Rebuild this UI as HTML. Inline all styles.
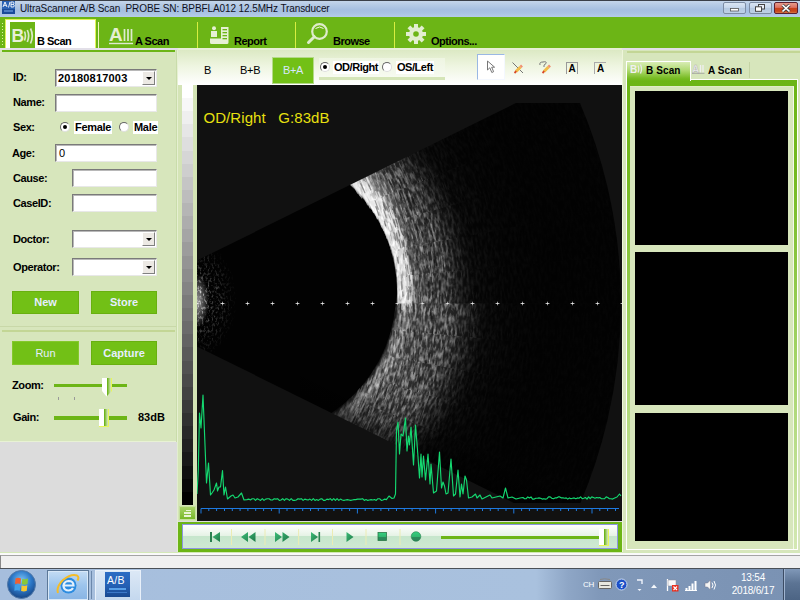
<!DOCTYPE html>
<html>
<head>
<meta charset="utf-8">
<title>UltraScanner A/B Scan</title>
<style>
*{box-sizing:border-box;margin:0;padding:0}
html,body{width:800px;height:600px;overflow:hidden;background:#dcdcdc;font-family:"Liberation Sans",sans-serif;font-size:11px;color:#000}
.a{position:absolute}
.b{font-weight:bold}
#title{left:0;top:0;width:800px;height:17px;background:linear-gradient(#c4d5ea 0,#b2c8e4 30%,#a6bfe0 55%,#a9c3e2 75%,#b6cce7 100%);border-top:1px solid #3a3f48}
#title .t{left:20px;top:1px;font-size:10px;line-height:13px;color:#101020;white-space:pre;letter-spacing:-0.1px}
#tool{left:0;top:17px;width:800px;height:31px;background:#6cb516;overflow:hidden}
.tl{position:absolute;top:18px;font-weight:bold;font-size:11px;line-height:13px;white-space:nowrap;letter-spacing:-0.5px}
.sep{position:absolute;top:5px;width:1px;height:26px;background:#d8ee40}
.lbl{position:absolute;left:13px;font-weight:bold;font-size:11px;line-height:13px;white-space:nowrap;letter-spacing:-0.4px}
.fld{position:absolute;height:18px;background:#fff;border:1px solid;border-color:#7a7a7a #e8e8e8 #e8e8e8 #7a7a7a;box-shadow:inset 1px 1px 0 #b8b8b8}
.dd{position:absolute;right:1px;top:1px;width:13px;height:14px;background:#ece9e4;border:1px solid;border-color:#fff #808080 #808080 #fff}
.dd:after{content:"";position:absolute;left:3px;top:5px;border:3px solid transparent;border-top:3px solid #000;border-bottom:0}
.btn{position:absolute;height:23px;background:#72c016;border:1px solid #68b010;color:#e6eeff;font-weight:bold;font-size:11px;line-height:21px;text-align:center}
.radio{position:absolute;width:10px;height:10px;border-radius:50%;background:#fff;border:1px solid;border-color:#666 #ddd #ddd #666}
.radio.on:after{content:"";position:absolute;left:2px;top:2px;width:4px;height:4px;border-radius:50%;background:#000}
.rl{position:absolute;background:#fff;font-weight:bold;font-size:11px;line-height:13px;height:13px;padding:0 1px;white-space:nowrap}
</style>
</head>
<body>
<!-- title bar -->
<div class="a" id="title">
  <svg class="a" style="left:2px;top:0px" width="13" height="13" viewBox="0 0 13 13"><rect width="13" height="13" fill="#2a62b4"/><rect y="8" width="13" height="5" fill="#1a4a98"/><path d="M1 6 L3 1 L5 6 M1.8 4.3H4.2 M6.5 6.5 L8 .8 M9 1V6 M9 1H11Q12 1 12 2.2Q12 3.4 11 3.4H9 M11 3.4Q12.3 3.6 12.3 4.8Q12.3 6 11 6H9" stroke="#fff" stroke-width=".9" fill="none"/><path d="M2 10H11" stroke="#6fa0e0" stroke-width="1.2"/></svg>
  <div class="a t">UltraScanner A/B Scan  PROBE SN: BPBFLA012 12.5MHz Transducer</div>
</div>
<!-- window controls -->
<svg class="a" style="left:720px;top:1px" width="80" height="15" viewBox="720 1 80 15">
<defs><linearGradient id="wb" x1="0" x2="0" y1="0" y2="1"><stop offset="0" stop-color="#dbe6f3"/><stop offset=".45" stop-color="#c8d8ec"/><stop offset=".5" stop-color="#b4c8e0"/><stop offset="1" stop-color="#bfd2e8"/></linearGradient>
<linearGradient id="wr" x1="0" x2="0" y1="0" y2="1"><stop offset="0" stop-color="#e8a090"/><stop offset=".45" stop-color="#dc7060"/><stop offset=".5" stop-color="#c8401c"/><stop offset=".8" stop-color="#c8481c"/><stop offset="1" stop-color="#d88858"/></linearGradient></defs>
<rect x="723.5" y="2.5" width="22" height="11" rx="1.5" fill="url(#wb)" stroke="#7c8ca4"/>
<rect x="749.5" y="2.5" width="22" height="11" rx="1.5" fill="url(#wb)" stroke="#7c8ca4"/>
<rect x="774.5" y="2.5" width="23" height="11" rx="1.5" fill="url(#wr)" stroke="#5c2030"/>
<rect x="730.5" y="8.5" width="8" height="2.5" fill="#fff" stroke="#555" stroke-width=".8"/>
<rect x="758.5" y="4.500" width="6" height="4.500" fill="#e8eef8" stroke="#444" stroke-width="1"/><rect x="755.5" y="6.800" width="6" height="4.500" fill="#fff" stroke="#444" stroke-width="1"/>
<path d="M782.5 5L789.5 11.500M789.500 5L782.500 11.500" stroke="#444" stroke-width="3.200"/><path d="M782.500 5L789.500 11.500M789.500 5L782.500 11.500" stroke="#fff" stroke-width="1.700"/>
</svg>
<!-- toolbar -->
<div class="a" id="tool">
  <!-- grip dots -->
  <svg class="a" style="left:1px;top:5px" width="3" height="24"><g fill="#dff0a0"><rect x="1" y="1" width="1" height="1"/><rect x="1" y="4" width="1" height="1"/><rect x="1" y="7" width="1" height="1"/><rect x="1" y="10" width="1" height="1"/><rect x="1" y="13" width="1" height="1"/><rect x="1" y="16" width="1" height="1"/><rect x="1" y="19" width="1" height="1"/><rect x="1" y="22" width="1" height="1"/></g></svg>
  <!-- selected B Scan tab -->
  <div class="a" style="left:5px;top:2px;width:91px;height:30px;background:#fff;border:1px solid #e2f25a;border-bottom:0"></div>
  <div class="a" style="left:10px;top:5px;width:25px;height:26px;background:#6cb516"></div>
  <svg class="a" style="left:10px;top:5px" width="25" height="26" viewBox="0 0 25 26"><text x="1.500" y="20" font-family="Liberation Sans" font-weight="bold" font-size="17.500" fill="#e8f0d8">B</text><path d="M14.500 9.500Q16.300 13.500 14.500 18.500 M17.300 8Q20 13.500 17.300 20 M20.500 6.500Q24 13.500 20.500 21.500" stroke="#dbe8c8" stroke-width="1.700" fill="none"/></svg>
  <div class="tl" style="left:37px">B Scan</div>
  <div class="sep" style="left:98px;background:#eef5c0"></div>
  <!-- A scan -->
  <svg class="a" style="left:108px;top:8px" width="27" height="20" viewBox="0 0 27 20"><text x="1" y="16" font-family="Liberation Sans" font-weight="bold" font-size="19" fill="#e4efd2">A</text><path d="M16.5 4V16 M20 4V16 M23.5 4V16" stroke="#dfead0" stroke-width="1.7"/><path d="M1 18.5H25" stroke="#dfead0" stroke-width="1.4"/></svg>
  <div class="tl" style="left:135px">A Scan</div>
  <div class="sep" style="left:197px"></div>
  <!-- report -->
  <svg class="a" style="left:209px;top:8px" width="22" height="20" viewBox="0 0 22 20"><g fill="#e6f0d4"><circle cx="5" cy="3.2" r="2"/><path d="M2 6H8V12H2z"/><path d="M1 13.5H12V2H19.5V17.5Q19.5 19 18 19H2.5Q1 19 1 17.5z"/></g><g fill="#6cb516"><rect x="13.5" y="4" width="4.5" height="1.3"/><rect x="13.5" y="7" width="4.5" height="1.3"/><rect x="13.5" y="10" width="4.5" height="1.3"/><rect x="13.5" y="13" width="4.5" height="1.3"/></g></svg>
  <div class="tl" style="left:234px">Report</div>
  <div class="sep" style="left:295px"></div>
  <!-- browse -->
  <svg class="a" style="left:306px;top:5px" width="24" height="24" viewBox="0 0 24 24"><circle cx="13.5" cy="9.5" r="7.3" fill="none" stroke="#dfeccb" stroke-width="2.2"/><path d="M8.3 14.7L2.5 20.5" stroke="#dfeccb" stroke-width="3" stroke-linecap="round"/><path d="M9.5 6.5Q13.5 3.5 17.5 6.5" stroke="#f4f9ea" stroke-width="1" fill="none"/></svg>
  <div class="tl" style="left:333px">Browse</div>
  <div class="sep" style="left:394px"></div>
  <!-- options -->
  <svg class="a" style="left:405px;top:6px" width="22" height="22" viewBox="-11 -11 22 22"><g fill="#e2eed0"><circle r="7"/><g id="tth"><rect x="-2" y="-10" width="4" height="20"/></g><use href="#tth" transform="rotate(45)"/><use href="#tth" transform="rotate(90)"/><use href="#tth" transform="rotate(135)"/></g><circle r="2.8" fill="#6cb516"/></svg>
  <div class="tl" style="left:431px">Options...</div>
</div>

<!-- strips under toolbar -->
<div class="a" style="left:0;top:48px;width:800px;height:2px;background:#e2dfe8"></div><div class="a" style="left:178px;top:48px;width:444px;height:2px;background:#e6efd4"></div>
<!-- left panel -->
<div class="a" id="left" style="left:0;top:50px;width:178px;height:392px;background:#d7e6bc;border-right:1px solid #e6f0d2;border-bottom:1px solid #e8f2d4">
  <div class="a" style="left:2px;top:0;width:173px;height:2px;background:#6cb516"></div>
  <div class="a" style="left:176px;top:0;width:1px;height:392px;background:#c9dcaa"></div>
</div>
<div class="a" style="left:0;top:0;width:0;height:0" id="form">
  <div class="lbl" style="top:71px">ID:</div>
  <div class="fld" style="left:55px;top:69px;width:102px"><span class="a b" style="left:2px;top:2px;font-size:11px;line-height:12px;letter-spacing:0.2px">20180817003</span><div class="dd"></div></div>
  <div class="lbl" style="top:96px">Name:</div>
  <div class="fld" style="left:55px;top:94px;width:102px"></div>
  <div class="lbl" style="top:121px">Sex:</div>
  <div class="radio on" style="left:60px;top:122px"></div>
  <div class="rl" style="left:74px;top:121px;letter-spacing:-0.3px">Female</div>
  <div class="radio" style="left:119px;top:122px"></div>
  <div class="rl" style="left:133px;top:121px;letter-spacing:-0.3px">Male</div>
  <div class="lbl" style="top:147px;left:12px">Age:</div>
  <div class="fld" style="left:55px;top:144px;width:102px"><span class="a" style="left:3px;top:2px;font-size:11px;line-height:12px">0</span></div>
  <div class="lbl" style="top:172px">Cause:</div>
  <div class="fld" style="left:72px;top:169px;width:85px"></div>
  <div class="lbl" style="top:197px">CaseID:</div>
  <div class="fld" style="left:72px;top:194px;width:85px"></div>
  <div class="lbl" style="top:233px">Doctor:</div>
  <div class="fld" style="left:72px;top:230px;width:85px"><div class="dd"></div></div>
  <div class="lbl" style="top:261px">Operator:</div>
  <div class="fld" style="left:72px;top:258px;width:85px"><div class="dd"></div></div>
  <div class="btn" style="left:12px;top:291px;width:67px">New</div>
  <div class="btn" style="left:91px;top:291px;width:66px">Store</div>
  <div class="a" style="left:0;top:326px;width:176px;height:1px;background:#c8d8a8"></div>
  <div class="a" style="left:2px;top:330px;width:173px;height:2px;background:#c3d695"></div>
  <div class="btn" style="left:12px;top:341px;width:67px;height:24px;line-height:22px;font-weight:normal;border-color:#84c82c">Run</div>
  <div class="btn" style="left:91px;top:341px;width:66px;height:24px;line-height:22px">Capture</div>
  <!-- zoom slider -->
  <div class="lbl" style="top:379px;left:12px">Zoom:</div>
  <div class="a" style="left:54px;top:384px;width:73px;height:3px;background:#6cb516"></div>
  <svg class="a" style="left:102px;top:378px" width="10" height="19" viewBox="0 0 10 19"><defs><linearGradient id="tg" x1="0" x2="1"><stop offset="0" stop-color="#fff"/><stop offset=".5" stop-color="#fff"/><stop offset=".52" stop-color="#64b010"/><stop offset=".88" stop-color="#d4e6b8"/><stop offset=".9" stop-color="#e8f65a"/><stop offset="1" stop-color="#e8f65a"/></linearGradient></defs><path d="M0 0H10V13L4.5 18.5L0 13z" fill="url(#tg)"/></svg>
  <div class="a" style="left:58px;top:397px;width:1px;height:3px;background:#999"></div>
  <div class="a" style="left:74px;top:397px;width:1px;height:3px;background:#999"></div>
  <!-- gain slider -->
  <div class="lbl" style="top:411px">Gain:</div>
  <div class="a" style="left:54px;top:416px;width:73px;height:4px;background:#6cb516"></div>
  <svg class="a" style="left:99px;top:409px" width="10" height="18" viewBox="0 0 10 18"><rect width="10" height="18" fill="url(#tg)"/><rect y="17" width="10" height="1" fill="#e8f65a"/></svg>
  <div class="lbl" style="top:411px;left:138px;letter-spacing:0">83dB</div>
</div>

<!-- center top strip -->
<div class="a" id="ctop" style="left:178px;top:50px;width:444px;height:35px;background:linear-gradient(#dce9c4,#eef5e0 45%,#ffffff)"></div>
<div class="a" style="left:204px;top:64px;font-size:11px;line-height:13px">B</div>
<div class="a" style="left:240px;top:64px;font-size:11px;line-height:13px;letter-spacing:-0.3px">B+B</div>
<div class="a" style="left:272px;top:57px;width:42px;height:27px;background:#72c016;border:1px solid #b4da88;color:#d8e8ff;font-size:11px;line-height:25px;text-align:center;letter-spacing:-0.3px">B+A</div>
<div class="a" style="left:319px;top:58px;width:126px;height:22px;background:linear-gradient(#eef5e2,#f8fbf2)"></div>
<div class="a" style="left:319px;top:77px;width:126px;height:3px;background:#d5e5b8"></div>
<div class="radio on" style="left:320px;top:62px"></div>
<div class="rl" style="left:333px;top:61px;letter-spacing:-0.45px">OD/Right</div>
<div class="radio" style="left:382px;top:62px"></div>
<div class="rl" style="left:396px;top:61px;letter-spacing:-0.45px">OS/Left</div>
<!-- tool icons -->
<div class="a" style="left:477px;top:54px;width:28px;height:26px;background:#fff;border:1px solid;border-color:#9ab8e4 #f4f8ff #f4f8ff #9ab8e4"></div>
<svg class="a" style="left:486px;top:60px" width="11" height="14" viewBox="0 0 11 14"><path d="M1.5 1V10L3.8 7.8L5.8 12.5L7.6 11.7L5.7 7.2H8.6z" fill="#fff" stroke="#777" stroke-width="1"/></svg>
<svg class="a" style="left:511px;top:61px" width="15" height="13" viewBox="0 0 15 13"><path d="M1.500 1.500L12 12" stroke="#666" stroke-width=".9"/><path d="M5 10.500L9.500 6" stroke="#f2bc48" stroke-width="3"/><path d="M3.500 12L5.300 10.200" stroke="#d84828" stroke-width="1.800"/><path d="M9.500 6L11 4.500" stroke="#f09070" stroke-width="2.600"/></svg>
<svg class="a" style="left:538px;top:60px" width="16" height="14" viewBox="0 0 16 14"><path d="M2 5Q1 2 5 2Q9 1 8 3.5Q5 5 6 7" stroke="#777" stroke-width="1" fill="none"/><path d="M6 11.500L10.500 7" stroke="#f2bc48" stroke-width="3"/><path d="M4.500 13L6.300 11.200" stroke="#d84828" stroke-width="1.800"/><path d="M10.500 7L12 5.500" stroke="#f09070" stroke-width="2.600"/></svg>
<div class="a b" style="left:566px;top:62px;width:12px;height:12px;border:1px solid #999;border-bottom:0;font-size:10px;line-height:12px;text-align:center">A</div>
<div class="a b" style="left:594px;top:62px;width:12px;height:12px;border-top:1px solid #aaa;border-left:1px solid #aaa;font-size:10px;line-height:12px;text-align:center">A</div>
<!-- grayscale strip column -->
<div class="a" style="left:178px;top:85px;width:19px;height:436px;background:#d4e4b6"></div>
<div class="a" id="gbar" style="left:182px;top:85px;width:11px;height:420px;background:linear-gradient(#ffffff 0.000%,#ffffff 3.125%,#f7f7f7 3.125%,#f7f7f7 6.250%,#efefef 6.250%,#efefef 9.375%,#e6e6e6 9.375%,#e6e6e6 12.500%,#dedede 12.500%,#dedede 15.625%,#d6d6d6 15.625%,#d6d6d6 18.750%,#cecece 18.750%,#cecece 21.875%,#c5c5c5 21.875%,#c5c5c5 25.000%,#bdbdbd 25.000%,#bdbdbd 28.125%,#b5b5b5 28.125%,#b5b5b5 31.250%,#adadad 31.250%,#adadad 34.375%,#a5a5a5 34.375%,#a5a5a5 37.500%,#9c9c9c 37.500%,#9c9c9c 40.625%,#949494 40.625%,#949494 43.750%,#8c8c8c 43.750%,#8c8c8c 46.875%,#848484 46.875%,#848484 50.000%,#7b7b7b 50.000%,#7b7b7b 53.125%,#737373 53.125%,#737373 56.250%,#6b6b6b 56.250%,#6b6b6b 59.375%,#636363 59.375%,#636363 62.500%,#5a5a5a 62.500%,#5a5a5a 65.625%,#525252 65.625%,#525252 68.750%,#4a4a4a 68.750%,#4a4a4a 71.875%,#424242 71.875%,#424242 75.000%,#3a3a3a 75.000%,#3a3a3a 78.125%,#313131 78.125%,#313131 81.250%,#292929 81.250%,#292929 84.375%,#212121 84.375%,#212121 87.500%,#191919 87.500%,#191919 90.625%,#101010 90.625%,#101010 93.750%,#080808 93.750%,#080808 96.875%,#000000 96.875%,#000000 100.000%)"></div>
<div class="a" style="left:179px;top:506px;width:17px;height:14px;background:linear-gradient(#a8d468,#78b828);border:1px solid #c4e09c"></div>
<div class="a" style="left:186px;top:510px;width:5px;height:1px;background:#e8f4d4"></div>
<div class="a" style="left:184px;top:512px;width:7px;height:1.500px;background:#e8f4d4"></div>
<div class="a" style="left:184px;top:515px;width:7px;height:1.500px;background:#e8f4d4"></div>
<!-- image area -->
<div class="a" id="img" style="left:197px;top:85px;width:425px;height:436px;background:#111;overflow:hidden">
<svg class="a" style="left:0;top:0" width="425" height="436" viewBox="197 85 425 436">
<defs>
<clipPath id="secr"><rect x="197" y="103" width="425" height="400"/></clipPath>
<clipPath id="sec"><path d="M110 303.5L568.1 77.2A511 511 0 0 1 568.1 529.8z" clip-path="url(#secr)"/></clipPath>
<filter id="spk" x="0" y="0" width="1" height="1" color-interpolation-filters="sRGB"><feTurbulence type="fractalNoise" baseFrequency="0.46 0.13" numOctaves="3" seed="4"/><feColorMatrix type="matrix" values="0 0 0 0 0  0 0 0 0 0  0 0 0 0 0  3.0 0 0 0 -1.2"/><feGaussianBlur stdDeviation="0.45"/><feComposite in="SourceGraphic" operator="in"/></filter>
<filter id="spk2" x="0" y="0" width="1" height="1" color-interpolation-filters="sRGB"><feTurbulence type="fractalNoise" baseFrequency="0.5 0.3" numOctaves="2" seed="9"/><feColorMatrix type="matrix" values="0 0 0 0 0  0 0 0 0 0  0 0 0 0 0  3.2 0 0 0 -1.55"/><feComposite in="SourceGraphic" operator="in"/></filter>
<radialGradient id="envT" gradientUnits="userSpaceOnUse" cx="250.8" cy="292.1" r="300"><stop offset="0.0000" stop-color="#fff" stop-opacity="0"/><stop offset="0.4857" stop-color="#fff" stop-opacity="0"/><stop offset="0.4923" stop-color="#fff" stop-opacity="1"/><stop offset="0.5207" stop-color="#fff" stop-opacity="0.95"/><stop offset="0.5473" stop-color="#fff" stop-opacity="0.55"/><stop offset="0.6473" stop-color="#fff" stop-opacity="0.43"/><stop offset="0.6973" stop-color="#fff" stop-opacity="0.18"/><stop offset="0.7440" stop-color="#fff" stop-opacity="0.07"/><stop offset="0.8540" stop-color="#fff" stop-opacity="0.03"/><stop offset="1.0000" stop-color="#fff" stop-opacity="0.015"/></radialGradient>
<radialGradient id="envB" gradientUnits="userSpaceOnUse" cx="250.8" cy="292.1" r="300"><stop offset="0.0000" stop-color="#fff" stop-opacity="0"/><stop offset="0.4807" stop-color="#fff" stop-opacity="0"/><stop offset="0.5040" stop-color="#fff" stop-opacity="0.62"/><stop offset="0.5207" stop-color="#fff" stop-opacity="0.66"/><stop offset="0.5540" stop-color="#fff" stop-opacity="0.56"/><stop offset="0.6707" stop-color="#fff" stop-opacity="0.5"/><stop offset="0.7307" stop-color="#fff" stop-opacity="0.22"/><stop offset="0.7873" stop-color="#fff" stop-opacity="0.07"/><stop offset="0.8873" stop-color="#fff" stop-opacity="0.03"/><stop offset="1.0000" stop-color="#fff" stop-opacity="0.015"/></radialGradient>
<radialGradient id="bT" gradientUnits="userSpaceOnUse" cx="250.8" cy="292.1" r="300"><stop offset="0.0000" stop-color="#fff" stop-opacity="0"/><stop offset="0.4857" stop-color="#fff" stop-opacity="0"/><stop offset="0.4923" stop-color="#fff" stop-opacity="0.6"/><stop offset="0.5140" stop-color="#fff" stop-opacity="0.55"/><stop offset="0.5373" stop-color="#fff" stop-opacity="0.2"/><stop offset="0.5873" stop-color="#fff" stop-opacity="0.07"/><stop offset="0.6873" stop-color="#fff" stop-opacity="0.02"/><stop offset="0.7540" stop-color="#fff" stop-opacity="0"/><stop offset="1.0000" stop-color="#fff" stop-opacity="0"/></radialGradient>
<radialGradient id="bB" gradientUnits="userSpaceOnUse" cx="250.8" cy="292.1" r="300"><stop offset="0.0000" stop-color="#fff" stop-opacity="0"/><stop offset="0.4807" stop-color="#fff" stop-opacity="0"/><stop offset="0.5040" stop-color="#fff" stop-opacity="0.2"/><stop offset="0.5173" stop-color="#fff" stop-opacity="0.2"/><stop offset="0.5473" stop-color="#fff" stop-opacity="0.1"/><stop offset="0.6373" stop-color="#fff" stop-opacity="0.06"/><stop offset="0.7207" stop-color="#fff" stop-opacity="0.02"/><stop offset="0.7873" stop-color="#fff" stop-opacity="0"/><stop offset="1.0000" stop-color="#fff" stop-opacity="0"/></radialGradient>
<radialGradient id="nf" gradientUnits="userSpaceOnUse" cx="193" cy="300" r="62" gradientTransform="translate(193 300) scale(.72 1) translate(-193 -300)"><stop offset="0" stop-color="#fff" stop-opacity="1"/><stop offset=".18" stop-color="#fff" stop-opacity=".8"/><stop offset=".36" stop-color="#fff" stop-opacity=".36"/><stop offset=".7" stop-color="#fff" stop-opacity=".16"/><stop offset="1" stop-color="#fff" stop-opacity="0"/></radialGradient>
<mask id="mE" maskUnits="userSpaceOnUse" x="197" y="85" width="425" height="436"><rect x="197" y="85" width="425" height="218.5" fill="url(#envT)"/><rect x="197" y="303.5" width="425" height="218" fill="url(#envB)"/></mask>
<mask id="mN" maskUnits="userSpaceOnUse" x="197" y="85" width="425" height="436"><rect x="197" y="85" width="60" height="436" fill="url(#nf)"/></mask>
</defs>
<g clip-path="url(#sec)">
<rect x="197" y="85" width="425" height="436" fill="#020202"/>
<rect x="197" y="85" width="425" height="218.5" fill="url(#bT)"/><rect x="197" y="303.5" width="425" height="218" fill="url(#bB)"/>
<radialGradient id="blob" gradientUnits="userSpaceOnUse" cx="0" cy="0" r="1"><stop offset="0" stop-color="#fff" stop-opacity=".5"/><stop offset=".5" stop-color="#fff" stop-opacity=".3"/><stop offset="1" stop-color="#fff" stop-opacity="0"/></radialGradient>
<g mask="url(#mE)"><ellipse cx="0" cy="0" rx="1" ry="1" fill="url(#blob)" transform="translate(372 196) rotate(-42) scale(24 46)"/></g>
<g mask="url(#mE)">
<rect x="197" y="85" width="425" height="436" fill="#fff" opacity=".2"/>
<clipPath id="w0"><path d="M110 303.5L681.1 14.7L705.9 70z"/></clipPath>
<g clip-path="url(#w0)"><g transform="rotate(-24.11 110.0 303.5) translate(0 0)"><rect x="290" y="275.3" width="350" height="56.4" fill="#fff" filter="url(#spk)"/></g></g>
<clipPath id="w1"><path d="M110 303.5L705.6 69.3L725.1 126.7z"/></clipPath>
<g clip-path="url(#w1)"><g transform="rotate(-18.75 110.0 303.5) translate(-53 120)"><rect x="343" y="155.3" width="350" height="56.4" fill="#fff" filter="url(#spk)"/></g></g>
<clipPath id="w2"><path d="M110 303.5L724.9 125.9L738.9 184.9z"/></clipPath>
<g clip-path="url(#w2)"><g transform="rotate(-13.39 110.0 303.5) translate(-16 240)"><rect x="306" y="35.3" width="350" height="56.4" fill="#fff" filter="url(#spk)"/></g></g>
<clipPath id="w3"><path d="M110 303.5L738.8 184.1L747.2 244.1z"/></clipPath>
<g clip-path="url(#w3)"><g transform="rotate(-8.04 110.0 303.5) translate(-69 360)"><rect x="359" y="-84.7" width="350" height="56.4" fill="#fff" filter="url(#spk)"/></g></g>
<clipPath id="w4"><path d="M110 303.5L747.2 243.3L750 303.9z"/></clipPath>
<g clip-path="url(#w4)"><g transform="rotate(-2.68 110.0 303.5) translate(-32 480)"><rect x="322" y="-204.7" width="350" height="56.4" fill="#fff" filter="url(#spk)"/></g></g>
<clipPath id="w5"><path d="M110 303.5L750 303.1L747.2 363.7z"/></clipPath>
<g clip-path="url(#w5)"><g transform="rotate(2.68 110.0 303.5) translate(-85 200)"><rect x="375" y="75.3" width="350" height="56.4" fill="#fff" filter="url(#spk)"/></g></g>
<clipPath id="w6"><path d="M110 303.5L747.2 362.9L738.8 422.9z"/></clipPath>
<g clip-path="url(#w6)"><g transform="rotate(8.04 110.0 303.5) translate(-48 320)"><rect x="338" y="-44.7" width="350" height="56.4" fill="#fff" filter="url(#spk)"/></g></g>
<clipPath id="w7"><path d="M110 303.5L738.9 422.1L724.9 481.1z"/></clipPath>
<g clip-path="url(#w7)"><g transform="rotate(13.39 110.0 303.5) translate(-11 440)"><rect x="301" y="-164.7" width="350" height="56.4" fill="#fff" filter="url(#spk)"/></g></g>
<clipPath id="w8"><path d="M110 303.5L725.1 480.3L705.6 537.7z"/></clipPath>
<g clip-path="url(#w8)"><g transform="rotate(18.75 110.0 303.5) translate(-64 560)"><rect x="354" y="-284.7" width="350" height="56.4" fill="#fff" filter="url(#spk)"/></g></g>
<clipPath id="w9"><path d="M110 303.5L705.9 537L681.1 592.3z"/></clipPath>
<g clip-path="url(#w9)"><g transform="rotate(24.11 110.0 303.5) translate(-27 680)"><rect x="317" y="-404.7" width="350" height="56.4" fill="#fff" filter="url(#spk)"/></g></g>
</g>
<path d="M403.8 270.6l1.3 15.2M403.5 276.2l0.9 11.8M375.4 199.8l4.2 11.5M386.9 231.3l3.2 13.7M365.9 197.6l4.1 10.5M379.3 217.6l3 10.2M408.4 268.6l1.1 11.1M396.7 218.1l4.1 15.4M390.1 236.4l1.9 8.7M406.6 257.3l1.4 9.8M354.2 178.5l6.7 14.1M381 220.4l1.9 6.3M380.4 201.5l2.5 6.9M397.8 265.4l1 8.6M398.9 230l1.9 7.9M406.1 254.1l1.8 12.3M366.5 176.9l3.5 7.3M391.1 217.6l2.6 8.9M386.8 233l1.6 6.7M411.1 272.4l0.9 10.8M370.6 200.8l5.1 14.2M379 197.4l5.3 14.5M383.5 197.2l5 13.9M355.2 184.2l6.4 14.2M387.3 213.3l2.5 8.2M386.7 228.8l3.1 12.8M397.2 273l0.7 7.7M399.9 250.4l1.2 7.2M404.1 242.9l2.8 15.6M400.6 251.8l1.9 11.9M408.6 270.8l0.7 6.8M385.6 210.1l3.3 10.5M381.3 221.9l2.5 8.7M378.3 192l4.6 11.7M409.5 269.9l0.9 9.2M407.2 263.8l1.6 15.1M366.1 187.8l5.6 13.2M372.6 198.3l3.1 8.2M379 207.7l3.9 11.6M401 283.2l0.6 14.4M398.1 232.9l1.4 6M367.1 191.9l2.4 5.8M362.9 193.4l4.7 11.4M404.8 270.1l1.1 12.5M399.2 282l0.4 6.1M407.2 279.9l0.5 7.8M386.2 222.6l3.4 12.5M405.7 291.3l0.2 13.6M404.8 252.8l2.2 14.9M404.9 270.9l1.3 15M399.8 249l2.4 14.6M405.9 277.4l0.6 8M385.3 201.6l5.1 15M391.5 245l1.9 10.2M397.7 281.5l0.7 14.1M371 197.8l4.9 13M363.8 193.2l4.2 10.3M411.8 286.4l0.3 6.9M382.1 210.2l2.8 8.5M409.8 293.2l0.2 11.6M391.1 232l3.2 14.1M405.1 295.2l0.1 8M403.8 296.5l0 12.1M402.3 289.7l0.3 14M388.2 223.7l1.9 7M407.5 264.7l1.6 14.9M401 281.4l0.5 7.9M370 186.9l2.5 5.7M373.5 204l4.3 12.1M392.1 236l2.6 11.9M364.2 181.6l3 6.6M400.3 291.1l0.2 8M402.8 296l0.1 9.8M402 263.1l0.9 7.5M380.3 203.4l4 11.7M409.9 295l0.1 12.1M400.8 232.8l1.8 8M363 190.2l5.1 12.2M381.6 219.9l3.9 13.8M406.9 265l0.8 7.2M404.1 260.3l0.8 6.1M380.1 200.8l5 14.3M408.3 288.3l0.4 11M405.1 292.7l0.2 7.5M371.5 201.2l4.9 13.5M353.6 182.4l6.5 14.1M407.8 276.1l0.7 9.2M403.7 277.3l0.7 10.3M373.9 199l4.6 12.6M396.9 261.6l1 7.6M397.8 288.2l0.4 14.9M402.4 258.7l1.5 10.9M392.8 214.5l3.7 12.9M407.5 256.2l2 14.7M396.2 243.8l1.2 6M399.5 243.9l2.2 12M389.6 207.6l3.9 12.1M398.2 239.1l2.3 11.5M402.1 293.6l0.1 16M395.2 260.7l1.1 7.9M393.9 253.3l1.4 8.4M412.2 288.7l0.3 11.7M371.4 196.5l2.8 7.2M405.8 287.5l0.3 6.6M405.4 295.1l0.1 9.7M392.5 224.8l2.9 11.2M393.5 225l2.3 8.7M412.1 281l0.5 8.4M411.5 292.6l0.2 13.2M411.8 275.3l1 14.1M373.7 208l3.6 10.7M363.5 186.5l5.1 11.6M399.6 273.6l1 11.8M406.3 262.4l1.3 11.2M366.9 178.6l5.8 12.6M391.1 220.7l3.1 11.2M392.4 210.6l4.4 14.5M404.2 266.6l0.8 7M398.7 251.6l1.3 8M399.9 239l2.8 14.1M398.2 263.6l1.6 14M400.5 245.9l2.7 15.7M395.1 235.3l2.8 13.2M393 248.5l2.4 14.5M383.1 208l2.2 6.5M395.6 228.6l3 12.6M385.6 228l2.4 9.3M365.6 182.6l4.8 10.7M391.9 233.1l3.3 15M396 248.1l1.7 9.5M398.8 258.3l1.1 7.9M384.2 227.3l2.8 10.8M351.9 181.1l5.7 12.1M381 216.1l3.9 13.1M408.4 293.6l0.2 9.9M403.5 236.9l2.6 12.5M404.4 283.6l0.6 13.2M406.6 259l1.6 12.6M407.3 292.2l0.2 14M400.7 265.8l0.9 7.4M394.7 253.3l1.3 7.9M398.6 263l1.8 15.6M363.8 181.8l5.6 12.5M370 202.7l3.6 9.9M372.6 204l2.8 7.9M378.3 213.4l2.7 8.4M377.3 196l3.3 8.5M400.1 278.8l0.9 14.8M399.8 283.9l0.4 6.5M400 253.3l1.7 11M396.5 218.7l3.3 12.1M378.6 216.6l3.1 10.3M403.4 247.4l2.2 12.9M369 196.7l3.2 8M388.8 222.4l2 7.2M392 222.3l1.8 6.7M403 278.6l0.9 15.5M397 229.5l2.4 9.9M375.6 191.6l3.4 8.5M388.1 235.7l2 8.8M407.1 277.5l0.7 9.6M399.3 253.9l2.2 15.5M399.8 251.7l1.4 8.9M394 239.8l2.5 12.4M382.4 219.2l3.6 12.8M402.3 235.1l2.4 11.4M363.2 192.9l4.8 11.8M406.4 256.8l1.6 11.8M355.5 183.7l3.2 6.8M364.2 189.5l2.7 6.2" stroke="#fff" stroke-width="1.3" stroke-opacity=".55" fill="none" stroke-linecap="round"/>
<path d="M392 335.7l-0.6 5M381.1 374l-2.5 8.9M404.7 306.2l-0.1 6M358.4 389.9l-3.7 10.1M368.8 378.7l-1.6 5.2M359.4 397.7l-2 5.3M395.7 321.1l-0.8 9.8M376.6 373.6l-2.1 7.6M400.7 315.9l-0.4 7.7M353.6 411.7l-4.1 8.7M396.2 344l-0.9 5.7M375.9 375.1l-2.4 8.3M392.7 361.8l-1.1 4.9M407.1 322l-1 11.9M376.5 380l-1.9 6.3M396.4 322l-1 11.6M360.7 389.9l-2.4 6.6M366.3 384l-3.7 11M389.2 345.1l-1.1 6.9M389.8 340l-1.7 11.1M404.2 303.9l-0.2 11.4M352.3 408.7l-3.3 7.2M407.4 313.4l-0.5 10.5M399.7 311.1l-0.3 7.6M389.5 356l-1 5M397.8 348.5l-1.8 10.4M367.9 396.8l-3.1 8.2M380.2 368.1l-1.4 5.5M357.9 402l-3.4 8.1M395.2 321.8l-0.7 8.7M391.6 345l-1.1 6.6M390.3 340.4l-0.8 5.6M388.4 359.8l-2.5 11.3M359.3 396.5l-3.6 9.2M405.4 320.4l-0.5 6.7M372.5 375.8l-2.5 8.4M384.7 359.3l-2.1 9.5M403.5 336.5l-1.1 8.8M393.2 337.8l-1.4 10M399.6 302l-0 5.3M377.8 368.2l-2.9 11.2M399.5 314.7l-0.6 11.1M361.2 392.2l-2 5.5M403.3 329.2l-1 9.2M381.7 365.4l-2.2 9.1M379.5 381l-3.2 10.3M372.9 389.7l-2.1 6.1M362.5 386l-2.3 6.8M370.7 387.2l-1.8 5.4M395 340.7l-1.2 8.1M380.3 370l-2.4 9.1M400.7 343.7l-1.5 9.7M404.1 318.4l-0.8 10.8M396.3 339.4l-1.7 11.6M353.2 406.6l-4.8 10.6M356.9 399.3l-2.4 6M385.5 358.8l-1.9 8.6M357.3 408.6l-4.2 9.5M354.5 399.3l-2.7 6.6M359.3 398.5l-3.6 9M379.1 379.2l-2.1 7.1M343.2 411.3l-2.7 5.7M399.8 324.2l-0.6 7.5M395.8 319.1l-0.6 8.8M354.1 407.2l-2.7 6.2M390.4 356.3l-1.2 6.1M404 301.6l-0.1 9M395.7 332.4l-1 8.6M393.2 328.1l-1 9.6M385.2 376.3l-2.6 9.3M400.4 327.6l-0.9 9.1M384.2 356.5l-1.8 8.5M390.3 351l-1.8 9.5M402.9 322.4l-0.6 7.5M367.7 394.4l-2.7 7.3M352.2 412.3l-2.5 5.5M373.3 379l-2.1 6.9M373.9 377l-2.4 8.1M407.1 319.5l-0.4 6M365.7 399.7l-3.2 8.1M363.6 398l-3.2 8.3M379 366.5l-2.1 8.5M358.4 391l-3.3 8.7M375.5 381.1l-2.4 7.7M378.3 383.8l-2.7 8.4M407.9 301.5l-0 7.6M359.3 388.7l-3.6 9.9M341.3 408.2l-3.3 7.1M383.4 372l-2.2 8.4M386.2 364.6l-2.6 10.8" stroke="#fff" stroke-width="1.2" stroke-opacity=".22" fill="none" stroke-linecap="round"/>
<path d="M415.2 205.7l2.8 9.4M383.3 391.8l-2.1 6.3M380.7 182.9l4 9.3M386.3 173.3l2.7 5.9M412 220l2.7 10.5M408.4 321.5l-0.5 6.9M398.6 168.1l4.4 9.7M411 391.6l-3 9.8M420.3 203l2.5 8M411.5 372.3l-1.9 7.8M420 243.7l1.3 7.1M417.3 392.4l-2.9 9.4M437 308.4l-0.1 5.9M417.6 347.1l-0.9 6.2M400.8 193.1l2.3 6.4M432 274.2l0.6 7.7M385.3 174.3l2.8 6M396.2 208l2.3 7.2M366.4 419.8l-4.3 9.1M362 407.9l-2.4 5.5M411.3 392.2l-2.8 9M388.4 181.5l4.3 10.2M392.5 415.8l-2.4 5.9M388.4 395.5l-3.3 9.5M399.4 163.7l3.9 8.4M404.7 356.4l-1.8 9.1M430.3 316.1l-0.4 7.5M408.1 361l-1.4 6.9M398.2 179.4l2.2 5.3M390.4 206.5l3 9M429.6 308.6l-0.1 5.3M421.9 269.5l0.6 5.6M378.1 176.3l2.9 6.3M411.3 317.9l-0.5 8.3M434.5 242l0.9 5M418.9 231.3l2.5 11.5M427.9 292.9l0.2 9.7M399.2 227.1l2.1 8.3M385 420.3l-2.7 6.2M430.6 354.1l-1.1 6.7M421.6 317.5l-0.4 6.7M403.9 222.6l1.9 7.2M408.6 317.1l-0.7 10.4M396.9 189.5l3.2 8.3M412 234.9l1.7 7.9M397.2 167.8l2.4 5.3M389.1 385.6l-2.1 6.8M408.1 255.2l0.9 5.8M419.8 240.7l2 11M415.3 297.8l0 10.6M431.3 224.2l2 8.6M370.9 184.3l2.7 6.2M378.9 394.8l-2.8 7.9M417.4 245.2l1.8 10.5M408.4 191.3l3.3 9.1M374.3 418.6l-4.8 10.4M430 267.1l0.9 9.3M405.6 405.2l-1.9 5.5M387.1 173.1l4.4 9.7M421.4 297.1l0 11.7M401.6 228.3l1.3 5.2M403.3 412.9l-3.9 9.9M430.9 260.6l1.3 10.8M408.2 355.1l-1.9 10.2M374.5 170.9l5.1 10.8M420 277.6l0.7 10.5M410.2 274.4l0.5 5.2M403.6 210.5l3.3 11.1M418.4 198.7l3.4 10.4M443.6 255.9l1.3 10.3M420.1 282.9l0.4 8.2M381.7 413.3l-2.4 5.9M422.7 247.4l1.1 6.2M410.9 309l-0.4 10.7M383.5 193.9l3.3 8.5M429.1 219.2l2.1 8.2M440.8 296.6l0.1 6.5M415.7 370.7l-1.8 7.8M356.6 410.4l-4.6 10M397.9 170l2.5 5.5M369.4 410.9l-3.3 7.7M416.6 322.2l-0.7 8.7M403.4 370.6l-1.5 6.4M441.5 260.4l1.2 10.1M382.4 425.9l-4.6 9.8M426.8 350.2l-1.6 9.5M417.9 318.2l-0.3 5.9M416.5 365.2l-1.1 5.3M426.9 336.3l-1 8.5M418 384.1l-2 7.4M399.4 388.1l-2.7 8.6M441.5 256.5l1 8M365.4 418.3l-4.1 8.8M383.2 419.1l-3.1 7M437.1 256.2l1.3 10.4M428 256.5l1.3 10.2M383.8 181.7l2.8 6.5M368.2 414.5l-2.6 5.9M371.9 179l2.3 5M414.3 253.2l0.9 6M441.5 311.1l-0.4 9.6M422.8 358.6l-2 10.4M381.5 392.6l-1.7 5.1M425.4 328.5l-0.8 8.6M395.2 372.2l-2.5 9.6M424.1 264.3l0.8 6.7M415.3 214.8l2.4 8.6M374.6 406.4l-3.8 9.3M401.2 171.9l4.6 10.8M418.9 203.8l1.9 6.2M402.7 228.9l1.9 7.9M424.5 312.2l-0.4 10M400.1 205l2.3 7.2M412.1 389.9l-2.3 7.8M413.9 265l0.6 5M419.6 295.6l0.1 6.1M367.6 400.7l-2.8 7M417.6 375.4l-1.4 5.6M413.6 367.6l-2.1 9.2M435.7 323.1l-0.6 8.4" stroke="#fff" stroke-width="1.1" stroke-opacity=".22" fill="none" stroke-linecap="round"/>
<path d="M432 343.1l-0.7 5.6M410.6 207.7l2.3 7.6M415.6 223.9l1.5 6.2M384.7 367.1l-1.3 5.2M370.5 403l-2 5.2M398.7 385.8l-1.4 4.7M427.1 306.8l-0.1 5M399.1 333l-0.7 6M433.1 325.8l-0.7 8.1M377.8 171.5l3.4 7M375.1 200.6l3.2 8.7M408 292.9l0.2 6.7M406.8 195.6l2.3 6.6M377 175.4l1.9 4.1M428.5 281.9l0.4 7.2M419.5 274.4l0.6 6.6M401.7 316.3l-0.4 6.8M412 198.4l3 9.1M411.6 355.4l-0.7 4.1M426.1 360.6l-1.2 6.4M415.8 237.9l1.9 9.5M395.9 219.3l1.4 4.9M415 330.1l-0.5 5.5M397.6 257.3l0.9 5.8M422.6 213.5l1.6 5.9M384.3 221.2l1.4 4.7M382.8 201.8l3.1 8.7M393.7 219.4l2.1 7.3M365.7 403.1l-3.2 7.9M417.6 245.7l1.3 7.5M373.1 423.7l-3 6.4M382.9 388.5l-1.9 6M363.1 420.2l-3.7 7.8M426 223.6l1.8 7.5M416.9 201.8l2.1 6.5M403.2 241.7l0.9 4.5M400.2 193.8l1.7 4.5M400.4 214.3l2.1 7M427.8 248.4l0.9 5.5M412.3 248.5l0.8 4.7M383.7 209.9l2.6 7.9M388.5 179.4l2.1 4.9M421.1 337.8l-0.7 6.1M372.5 418.4l-3 6.7M402 214.8l2.6 9.2M369 385.1l-2.5 7.7M368.4 416.3l-1.9 4.2M380.6 394.7l-3.3 9.3M391.9 407.8l-3.5 8.9M394.5 233l1.4 6.1M398.2 313.9l-0.3 6.7M397.5 376.1l-1.8 6.9M426 217.7l1.4 5.3M417.1 349.6l-0.6 4M386 416.9l-2.5 5.9M413.2 270.4l0.9 9.6M427 361l-1.4 7M387.1 387.4l-2.9 9M431.6 315.5l-0.3 6.5M430.1 352.8l-1.1 6.4M375.9 206.5l3 8.7M415.9 281l0.4 7.1M368.8 185l2.2 4.9M415.6 206.3l1.6 5.2M400.3 304.7l-0.1 8M417 349l-1.4 8.5M407.3 265l1 8.4M424.8 331.6l-0.5 5.1M423.3 246.3l1.1 6.2M417 320.6l-0.6 8.5M413 239.4l1.7 8.8M396.5 233.2l1.8 7.6M391.6 170.6l2.4 5.1M375.2 409l-1.9 4.6M428.5 295.7l0.1 6.9M410.6 329.1l-1 9.7M398.9 184.2l1.6 3.8M402.7 291.8l0.2 4.8M435.5 320.5l-0.4 5.8M416.6 257.2l1 7.6M407.3 241.6l1.7 9M414 304.9l-0.2 8.9M365.5 397l-1.8 4.9M382.8 368.9l-2.3 8.8M393.2 206.3l2.4 7.2M430.7 266.6l0.9 8.5M382.5 379.7l-2.1 7.2M395 196.9l2.9 8M417.3 250l0.8 4.7M387.7 399.6l-3.1 8.4M413.2 198.3l1.5 4.4M419.3 280.3l0.4 6.3M355.4 416.3l-4.1 8.5M403.3 240.4l1.3 6.6M397.2 326.4l-0.6 6.7M405.5 252.7l0.7 4.6M432.7 291.4l0.2 9.6M369.3 408.5l-1.9 4.7M358.4 418.2l-2.6 5.5M393.2 387.2l-2.9 9.3M426.5 360.2l-0.9 4.8M367 416.7l-3.4 7.4M398.3 230.4l1.4 5.6M403.4 178.7l1.8 4.4M405.2 207l1.6 5M386.7 206.8l1.7 5.1M406.2 335.8l-1.2 9.3M408.3 305l-0.2 9.8M408.9 197.9l2.8 8.4M418.6 261.7l1.1 9.6M409.3 275.3l0.4 4.3M377.4 400.8l-2.9 7.7M435 337.7l-1.1 9.5M368 413.3l-3.9 8.6M394 232.8l1.8 7.6M408 234.8l1.2 5.6M412 231.1l1.9 8.6M417.7 201.2l2 6.3M438 269l0.6 6.3M412.4 253.3l0.8 5.4M400.7 349.6l-1.2 7M430.7 312.5l-0.3 8.4M439.5 280.5l0.5 9.7M372.9 421.5l-2.8 6.1M429 240l1.3 6.7M398.9 364.2l-1.3 6M406.3 222l2.1 8.1M404.6 399.7l-2.6 7.6M414.6 198.6l1.4 4.1M435.7 256.5l1.2 9M433.6 322.8l-0.3 5.1M355.1 399.4l-2.2 5.5M408.5 289.9l0.3 9.2M360.8 183.7l4.1 9.1M433.8 256.9l0.8 6M432.3 312.6l-0.3 7.7M373 376.8l-2 7M424.3 266.5l0.5 4.1M399.2 329.5l-0.6 5.9M398.5 396.1l-1.9 5.6M418.1 201.1l2.7 8.5M357.6 417.4l-4 8.4M423.3 348.9l-1.1 7M397.5 376.8l-1.4 5.4M401.3 281.7l0.5 8M399 239.4l1.8 8.6M413 295.3l0.1 9.5M364.8 412.2l-2.9 6.7M340.6 411.6l-1.8 3.7M420.6 376.8l-2.1 8.3M413 321.7l-0.4 6.3M376.5 182.8l1.9 4.3M394.6 384.5l-1.8 6M379.2 388l-2.9 8.8M412.3 358.9l-1.5 7.4M432.5 333.9l-1.1 9.9M439.2 310.5l-0.2 5.5M380.8 423.5l-3.3 7.1M408.9 250.1l1.6 9.6M411.1 197.3l1.7 5" stroke="#000" stroke-width="1.2" stroke-opacity=".35" fill="none" stroke-linecap="round"/>
<circle cx="250.8" cy="292.1" r="145.2" fill="#020202"/>
<linearGradient id="fadeB" gradientUnits="userSpaceOnUse" x1="340" y1="417.1" x2="358.6" y2="379.5"><stop offset="0" stop-color="#000" stop-opacity=".55"/><stop offset=".4" stop-color="#000" stop-opacity=".28"/><stop offset="1" stop-color="#000" stop-opacity="0"/></linearGradient>
<rect x="300" y="340" width="322" height="170" fill="url(#fadeB)"/>
<radialGradient id="nfc" gradientUnits="userSpaceOnUse" cx="0" cy="0" r="1"><stop offset="0" stop-color="#fff" stop-opacity=".6"/><stop offset=".5" stop-color="#fff" stop-opacity=".3"/><stop offset="1" stop-color="#fff" stop-opacity="0"/></radialGradient>
<ellipse cx="0" cy="0" rx="1" ry="1" fill="url(#nfc)" transform="translate(197 301) scale(12 27)"/>
<g mask="url(#mN)"><rect x="197" y="230" width="60" height="150" fill="#fff" filter="url(#spk2)"/></g>
</g>
<path d="M195.5 303.5h4M197.5 301.7v3.6M220.5 303.5h4M222.5 301.7v3.6M245.5 303.5h4M247.5 301.7v3.6M270.5 303.5h4M272.5 301.7v3.6M295.5 303.5h4M297.5 301.7v3.6M320.5 303.5h4M322.5 301.7v3.6M345.5 303.5h4M347.5 301.7v3.6M370.5 303.5h4M372.5 301.7v3.6M395.5 303.5h4M397.5 301.7v3.6M420.5 303.5h4M422.5 301.7v3.6M445.5 303.5h4M447.5 301.7v3.6M470.5 303.5h4M472.5 301.7v3.6M495.5 303.5h4M497.5 301.7v3.6M520.5 303.5h4M522.5 301.7v3.6M545.5 303.5h4M547.5 301.7v3.6M570.5 303.5h4M572.5 301.7v3.6M595.5 303.5h4M597.5 301.7v3.6M620.5 303.5h4M622.5 301.7v3.6" stroke="#9a9a9a" stroke-width="1" fill="none"/>
<path d="M196.5 303.5h2M221.5 303.5h2M246.5 303.5h2M271.5 303.5h2M296.5 303.5h2M321.5 303.5h2M346.5 303.5h2M371.5 303.5h2M396.5 303.5h2M421.5 303.5h2M446.5 303.5h2M471.5 303.5h2M496.5 303.5h2M521.5 303.5h2M546.5 303.5h2M571.5 303.5h2M596.5 303.5h2M621.5 303.5h2" stroke="#e4e4e4" stroke-width="1"/>
<text x="203.500" y="123" font-family="Liberation Sans" font-size="15" letter-spacing=".06" fill="#e8e010" xml:space="preserve">OD/Right   G:83dB</text>
<polyline points="197,494 198.3,470 199.5,413 201,428 203,395 204,420 205,445 206.5,483 208.5,463 210.5,495 212,493 214,490 216.5,483 217.5,491 219,487 220.5,487 222.5,470.6 224,495 225.5,487 227.5,499 231,496 233,495 235,498 238,497 241.5,493 244,500 247,499.6 248.7,499.1 250.4,500 252.1,498.7 253.8,498.7 255.5,500.4 257.2,498.7 258.9,499.6 260.6,500.4 262.3,498.7 264,500.4 265.7,499.1 267.4,498.7 269.1,498.7 270.8,500 272.5,500 274.2,498.7 275.9,499.1 277.6,498.7 279.3,500.4 281,500 282.7,498.7 284.4,500.4 286.1,498.7 287.8,499.1 289.5,500.4 291.2,498.7 292.9,500.4 294.6,500.4 296.3,500 298,498.7 299.7,499.1 301.4,498.7 303.1,500.4 304.8,499.1 306.5,499.6 308.2,500 309.9,499.1 311.6,500.4 313.3,498.7 315,500.4 316.7,499.6 318.4,500.4 320.1,499.1 321.8,498.7 323.5,500.4 325.2,500.4 326.9,499.1 328.6,499.6 330.3,498.7 332,500.4 333.7,498.7 335.4,500.4 337.1,498.7 338.8,500.4 340.5,499.1 342.2,500 343.9,500.4 345.6,500 347.3,499.6 349,500 350.7,500.4 352.4,500 354.1,499.6 355.8,499.6 357.5,499.1 359.2,499.1 360.9,499.1 362.6,498.7 364.3,500.4 366,499.6 367.7,500.4 369.4,500 371.1,499.6 372.8,500 374.5,499.6 376.2,500.4 377.9,498.7 379.6,498.7 381.3,500.4 383,500 384.7,499.1 386.4,499.6 389,496 392,498.5 394,498 395.5,494 396.5,430 398,422 399.5,454 401,434 403,436 405.5,418 407,451 408.5,436 409.5,445 411,427 413.5,465 415.5,425 417.5,450 419.5,478 421,454 422,477 423.5,456 425.5,480 428,454 430,484 431,464 433.5,493 436.5,491 439.5,452 441.5,488 443,482 444.5,486 446,494 448,493 451,459 453.5,496 455.5,494 458,470 460,497 461.5,484 463,494 465,476 466.5,480 468.5,498 472,497 475.5,494 477,498 480,495 482,499 486,497 490,495 492,498 496,497 500,496 503,498 505.5,488 508,498 512,497 516,499 520,498 523,497.5 524.6,498.7 526.2,498.7 527.8,496.9 529.4,497.9 531,496.9 532.6,499.1 534.2,499.1 535.8,498.2 537.4,498.2 539,497.9 540.6,498.2 542.2,499.1 543.8,498.7 545.4,499.1 547,498.7 548.6,496.9 550.2,496.9 551.8,498.2 553.4,498.7 555,497.9 556.6,497.9 558.2,496.9 559.8,496.9 561.4,497.9 563,497.9 564.6,498.2 566.2,497.9 567.8,499.1 569.4,497.9 571,498.7 572.6,498.2 574.2,497.9 575.8,498.7 577.4,497.9 579,498.2 580.6,496.9 582.2,498.7 583.8,498.2 585.4,497.5 587,499.1 588.6,496.9 590.2,498.7 591.8,496.9 593.4,497.5 595,498.2 596.6,497.5 598.2,497.9 599.8,497.5 601.4,498.7 603,498.7 604.6,498.7 606.2,496.9 607.8,497.5 609.4,498.7 611,498.7 612.6,499.1 614.2,498.2 615.8,497.5 617,497 619.5,494 621,496" fill="none" stroke="#14d870" stroke-width="1.15" stroke-linejoin="round"/>
<path d="M201 508.500H619M201 508.500v5M208.8 508.500v2.5M216.6 508.500v2.5M224.5 508.500v2.5M232.3 508.500v2.5M240.1 508.500v2.5M247.9 508.500v2.5M255.7 508.500v2.5M263.6 508.500v2.5M271.4 508.500v2.5M279.2 508.500v5M287 508.500v2.5M294.8 508.500v2.5M302.7 508.500v2.5M310.5 508.500v2.5M318.3 508.500v2.5M326.1 508.500v2.5M333.9 508.500v2.5M341.8 508.500v2.5M349.6 508.500v2.5M357.4 508.500v5M365.2 508.500v2.5M373 508.500v2.5M380.9 508.500v2.5M388.7 508.500v2.5M396.5 508.500v2.5M404.3 508.500v2.5M412.1 508.500v2.5M420 508.500v2.5M427.8 508.500v2.5M435.6 508.500v5M443.4 508.500v2.5M451.2 508.500v2.5M459.1 508.500v2.5M466.9 508.500v2.5M474.7 508.500v2.5M482.5 508.500v2.5M490.3 508.500v2.5M498.2 508.500v2.5M506 508.500v2.5M513.8 508.500v5M521.6 508.500v2.5M529.4 508.500v2.5M537.3 508.500v2.5M545.1 508.500v2.5M552.9 508.500v2.5M560.7 508.500v2.5M568.5 508.500v2.5M576.4 508.500v2.5M584.2 508.500v2.5M592 508.500v5M599.8 508.500v2.5M607.6 508.500v2.5M615.5 508.500v2.5" stroke="#1e7ae0" stroke-width="1" fill="none"/>
</svg>
</div>
<!-- playback bar -->
<div class="a" style="left:178px;top:522px;width:444px;height:30px;background:#6cb516"></div>
<div class="a" id="pb" style="left:182px;top:524px;width:436px;height:25px;border:1px solid #8c96e0;background:linear-gradient(#ffffff,#e4f2e4 49%,#c6e6cc 50%,#cfe9d2)">
<svg class="a" style="left:-1px;top:-1px" width="436" height="25" viewBox="182 524 436 25">
<defs><linearGradient id="pg2" x1="0" x2="0" y1="0" y2="1"><stop offset="0" stop-color="#34d080"/><stop offset=".5" stop-color="#30b870"/><stop offset=".55" stop-color="#2a8c5c"/><stop offset="1" stop-color="#2a8458"/></linearGradient><linearGradient id="pg" x1="0" x2="1" y1="0" y2="1"><stop offset="0" stop-color="#3cbc78"/><stop offset="1" stop-color="#207848"/></linearGradient></defs>
<g stroke="#ececb4" stroke-width="1"><path d="M231.5 529V545M265 529V545M298.6 529V545M332.5 529V545M366 529V545M400 529V545"/></g>
<g fill="url(#pg)">
<rect x="210" y="532" width="2" height="10" fill="#2a8050"/><path d="M220 532V542L212.5 537z"/>
<path d="M248 532V542L241 537z M255.5 532V542L248.5 537z"/>
<path d="M275 532V542L282 537z M282.5 532V542L289.5 537z"/>
<path d="M311 532V542L318 537z"/><rect x="318.5" y="532" width="1.6" height="10" fill="#2a8050"/>
<path d="M346.5 532V542L353.5 537z"/>
<rect x="378" y="532.500" width="8.500" height="8" fill="url(#pg2)" stroke="#2a7848" stroke-width=".8"/>
<circle cx="416" cy="536.500" r="4.800" fill="url(#pg2)" stroke="#2a8050" stroke-width=".6"/>
</g>
<rect x="441" y="536" width="158" height="3" fill="#6cb516"/>
<rect x="599" y="529" width="10" height="17" fill="url(#tg)"/><rect x="599" y="545" width="10" height="1" fill="#e8f65a"/>
</svg>
</div>

<!-- right panel -->
<div class="a" id="right" style="left:622px;top:50px;width:178px;height:502px;background:#d7e6bc;border-left:1px solid #eef5da"></div>
<div class="a" style="left:627px;top:51px;width:173px;height:2px;background:#c3d695"></div>
<!-- tab page -->
<div class="a" style="left:626px;top:79px;width:172px;height:471px;background:#fff"></div>
<div class="a" style="left:627px;top:80px;width:170px;height:469px;background:linear-gradient(#6cb516,#74ba20 20%,#a4d468 60%,#d4e8b4 100%)"></div>
<div class="a" style="left:630px;top:86px;width:164px;height:463px;background:#d7e6bc;border-right:1px solid #f4f9ea;border-top:1px solid #e0ecc8"></div>
<div class="a" style="left:635px;top:91px;width:153px;height:154px;background:#000"></div>
<div class="a" style="left:635px;top:252px;width:153px;height:153px;background:#000"></div>
<div class="a" style="left:635px;top:413px;width:153px;height:128px;background:#000"></div>
<!-- tabs -->
<div class="a" style="left:626px;top:61px;width:65px;height:20px;background:linear-gradient(#d8ecb4,#b4dc78 40%,#78bc24 85%,#6cb516);border:1px solid #fff;border-bottom:0"></div>
<svg class="a" style="left:630px;top:64px" width="13" height="10" viewBox="0 0 13 10"><text x="0" y="8.5" font-family="Liberation Sans" font-weight="bold" font-size="10" fill="#f0f0f0">B</text><path d="M8 1.5Q9.5 5 8 8.5M10.5 .5Q12.5 5 10.5 9.5" stroke="#e8e8e8" stroke-width="1.3" fill="none"/></svg>
<div class="a b" style="left:646px;top:63.500px;font-size:10px;line-height:13px;letter-spacing:0.1px">B Scan</div>
<svg class="a" style="left:692px;top:64px" width="13" height="10" viewBox="0 0 13 10"><text x="0" y="8.5" font-family="Liberation Sans" font-weight="bold" font-size="10" fill="#f4f4f4" stroke="#aaa" stroke-width=".4">A</text><path d="M8.5 1V8.5M11 1V8.5" stroke="#f0f0f0" stroke-width="1.3"/><path d="M0 9.3H12.5" stroke="#999" stroke-width=".8"/></svg>
<div class="a b" style="left:708px;top:63.500px;font-size:10px;line-height:13px;letter-spacing:0.1px">A Scan</div>
<div class="a" style="left:749px;top:62px;width:1px;height:16px;background:#c4d4a4"></div>
<!-- bottom: gray area, status bar, taskbar -->
<div class="a" style="left:0;top:552px;width:800px;height:1px;background:#d4e8b8"></div>
<div class="a" style="left:0;top:553px;width:800px;height:2px;background:#fafafa"></div>
<div class="a" style="left:0;top:555px;width:800px;height:13px;background:#f0f0f0;border-left:1px solid #888;border-top:1px solid #a4a4a4"></div><div class="a" style="left:177px;top:442px;width:1px;height:110px;background:#e2eecf"></div>
<div class="a" style="left:0;top:568px;width:800px;height:1px;background:#4a5058"></div>
<div class="a" id="task" style="left:0;top:569px;width:800px;height:31px;background:linear-gradient(90deg,#a6bedd,#a9c1de 67%,#8ea6c6 71%,#8098b9 75%,#7a92b3 100%)">

<!-- start orb -->
<svg class="a" style="left:6px;top:0" width="32" height="31" viewBox="0 0 32 31">
<defs><radialGradient id="orb" cx=".5" cy=".35" r=".7"><stop offset="0" stop-color="#7cc4f4"/><stop offset=".5" stop-color="#2c78c8"/><stop offset="1" stop-color="#143c78"/></radialGradient></defs>
<circle cx="15.5" cy="15.5" r="14" fill="url(#orb)" stroke="#5078a8" stroke-width="1"/>
<path d="M9.5 9.5Q12 8 15 9.500L14.500 15Q12 13.800 9 15z" fill="#f06030"/>
<path d="M16.300 9.800Q19 11 22 9.500L21.500 15Q19 16.200 15.800 15.200z" fill="#88c838"/>
<path d="M8.800 16.200Q11.500 15 14.300 16.300L13.800 21.800Q11 20.500 8.300 21.800z" fill="#40a0e8"/>
<path d="M15.600 16.600Q18.500 17.600 21.300 16.300L20.800 21.800Q18 23 15.100 22z" fill="#f8c830"/>
</svg>
<!-- IE button -->
<div class="a" style="left:47px;top:1px;width:42px;height:30px;background:linear-gradient(#c4dcf4,#9cc4ec 50%,#88b4e4);border:1px solid #5c7898;border-bottom:0;box-shadow:inset 0 0 0 1px #d8e8f8"></div>
<svg class="a" style="left:55px;top:3px" width="26" height="26" viewBox="0 0 26 26">
<circle cx="13.500" cy="13.500" r="8" fill="#2c8ce0"/><path d="M8.500 13.500H18.500Q18.500 9 13.500 9Q9 9.500 8.500 13.500zM8.500 14.500Q9.500 18.500 13.500 18.500Q16.500 18.500 18 16" stroke="#e4f0fc" stroke-width="2.200" fill="none"/>
<path d="M3 21Q1 15 8 8Q16 1.500 22 3.500Q24.500 5 22.500 8.500" stroke="#f4bc28" stroke-width="2" fill="none"/>
</svg>
<div class="a" style="left:91px;top:2px;width:1px;height:28px;background:#6c88ac"></div>
<!-- A/B app button -->
<div class="a" style="left:95px;top:1px;width:46px;height:30px;background:linear-gradient(#dce8f6,#c4d8ee);border:1px solid #e8f0fa;border-bottom:0"></div>
<div class="a" style="left:105px;top:3px;width:25px;height:25px;background:linear-gradient(#2c6cc4,#2460b4 55%,#184890)"></div>
<div class="a" style="left:107px;top:5px;width:22px;color:#fff;font-size:10.500px;line-height:12px;letter-spacing:0.300px;white-space:nowrap">A/B</div>
<div class="a" style="left:109px;top:19px;width:17px;height:2px;background:#58a0e8"></div>
<div class="a" style="left:107px;top:23px;width:20px;height:1px;background:#3c78c8"></div>
<!-- tray -->
<div class="a" style="left:583px;top:11px;color:#fff;font-size:8px;line-height:10px;letter-spacing:-0.3px">CH</div>
<svg class="a" style="left:597px;top:8px" width="120" height="16" viewBox="597 577 120 16">
<rect x="598.500" y="581.500" width="13" height="7" rx="1" fill="#e8e8e0" stroke="#666"/><path d="M600 579.500Q604 578 610 579.500" stroke="#888" fill="none"/><path d="M600.500 585.500H609.500" stroke="#666"/>
<circle cx="621.500" cy="584.500" r="5.500" fill="#1c50c8" stroke="#c8d8f0" stroke-width="1"/><text x="619" y="588" font-family="Liberation Sans" font-weight="bold" font-size="9" fill="#fff">?</text>
<path d="M637 580H642V584" stroke="#f0f4fc" stroke-width="1.400" fill="none"/><path d="M637.500 589L639.500 591L641.500 589z" fill="#f0f4fc"/>
<path d="M651 588L654 584.500L657 588z" fill="#f4f8fc"/>
<path d="M667.500 579V591" stroke="#fff" stroke-width="1.300"/><path d="M668 580H676V586H668z" fill="#f8f8f8" stroke="#889" stroke-width=".5"/><rect x="672" y="585" width="6.500" height="6.500" fill="#e83020"/><path d="M673.500 586.500L677 590M677 586.500L673.500 590" stroke="#fff" stroke-width="1.100"/>
<path d="M686.500 590V588M689.500 590V586M692.500 590V583.500M695.500 590V581" stroke="#fff" stroke-width="2"/><path d="M685 590.500H697" stroke="#fff" stroke-width="1"/>
<path d="M705 583H707.500L710.500 580V590L707.500 587H705z" fill="#f4f4f4" stroke="#778" stroke-width=".5"/><path d="M712 582.500Q714 585 712 588M714 581Q717 585 714 589.500" stroke="#fff" stroke-width="1" fill="none"/>
</svg>
<div class="a" style="left:730px;top:3px;width:46px;text-align:center;color:#fff;font-size:10px;line-height:11px;letter-spacing:-0.200px">13:54</div>
<div class="a" style="left:726px;top:16px;width:54px;text-align:center;color:#fff;font-size:10px;line-height:11px;letter-spacing:-0.200px">2018/6/17</div>
<div class="a" style="left:783px;top:0;width:17px;height:31px;background:linear-gradient(#8098b8,#5c7494 45%,#4c6484);border-left:1px solid #3c4c64;box-shadow:inset 1px 0 0 #a0b4d0"></div>

</div>
</body>
</html>
